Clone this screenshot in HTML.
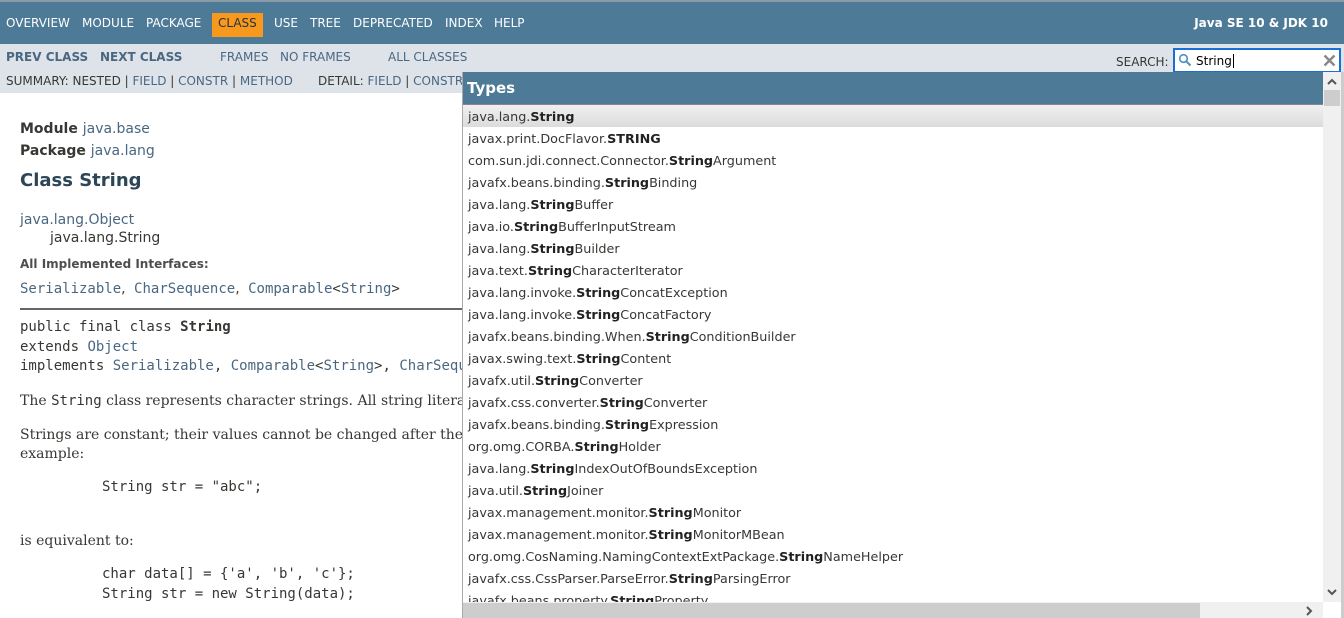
<!DOCTYPE html>
<html><head><meta charset="utf-8"><style>
*{margin:0;padding:0;box-sizing:border-box}
body{width:1344px;height:618px;overflow:hidden;background:#fff;font-family:"DejaVu Sans",sans-serif;position:relative}
.top{position:absolute;left:0;top:0;width:1344px;height:44px;background:#4d7a97;border-top:2px solid #8a9aa6}
.top span{position:absolute;top:14px;color:#fff;font-size:12px}
.top .cls{background:#f8981d;color:#253441;top:11px;height:24px;padding:3px 6px 0}
.jdk{position:absolute;right:16px;top:14px;color:#fff;font-size:11px;font-weight:bold}
.sub{position:absolute;left:0;top:44px;width:1344px;height:49px;background:#dee3e9;font-size:12px;color:#4a6782}
.sub span{position:absolute;white-space:nowrap}
.b{font-weight:bold}
.dk{color:#353833}
.c{font-family:"DejaVu Sans",sans-serif;color:#353833}
a{color:#4a6782;text-decoration:none}
.main{position:absolute;left:20px;color:#353833;white-space:nowrap}
.mono{font-family:"DejaVu Sans Mono",monospace;font-size:14px}
.ser{font-family:"DejaVu Serif",serif;font-size:14px}
.ac{position:absolute;left:462px;top:72px;width:880px;height:546px;background:#fff;border-left:1px solid #aaa;overflow:hidden}
.ac .hd{height:33px;background:#4d7a97;color:#fff;font-weight:bold;font-size:15px;padding:7px 0 0 4px;border-bottom:1px solid #888}
.ac .r{height:22px;font-size:12.75px;color:#353833;padding:5px 0 0 5px;white-space:nowrap}
.ac .r b{color:#222}
.ac .sel{background:linear-gradient(#f0f0f0,#dcdcdc);height:22px}
.vs{position:absolute;left:1323px;top:72px;width:18px;height:530px;background:#f0f0f0}
.hs{position:absolute;left:463px;top:602px;width:860px;height:16px;background:#f0f0f0}
</style></head><body>
<div class="top">
<span style="left:6px">OVERVIEW</span><span style="left:82px">MODULE</span><span style="left:146px">PACKAGE</span>
<span class="cls" style="left:212px">CLASS</span>
<span style="left:274px">USE</span><span style="left:310px">TREE</span><span style="left:353px">DEPRECATED</span><span style="left:445px">INDEX</span><span style="left:494px">HELP</span>
<span class="jdk" style="left:auto">Java SE 10 &amp; JDK 10</span>
</div>
<div class="sub">
<span class="b" style="left:6px;top:6px">PREV CLASS</span><span class="b" style="left:100px;top:6px">NEXT CLASS</span>
<span style="left:220px;top:6px">FRAMES</span><span style="left:280px;top:6px">NO FRAMES</span><span style="left:388px;top:6px">ALL CLASSES</span>
<span style="left:6px;top:30px"><span class="dk" style="position:static">SUMMARY: NESTED |</span> FIELD <span class="dk" style="position:static">|</span> CONSTR <span class="dk" style="position:static">|</span> METHOD</span>
<span style="left:318px;top:30px"><span class="dk" style="position:static">DETAIL:</span> FIELD <span class="dk" style="position:static">|</span> CONSTR</span>
<span class="dk" style="left:1116px;top:11px">SEARCH:</span>
</div>
<div style="position:absolute;left:1173px;top:48px;width:168px;height:25px;border:2px solid #1a6fd6;background:#fff;font-size:12px;color:#000">
<svg style="position:absolute;left:3px;top:3px" width="14" height="14" viewBox="0 0 14 14"><circle cx="5.5" cy="5.5" r="3.8" fill="none" stroke="#4a90c0" stroke-width="1.6"/><path d="M8.3 8.3L12.5 12.5" stroke="#4a90c0" stroke-width="2"/></svg>
<span style="position:absolute;left:21px;top:4px">String<span style="border-left:1px solid #000;margin-left:1px"></span></span>
<svg style="position:absolute;right:3px;top:4px" width="13" height="13" viewBox="0 0 13 13"><path d="M1.5 1.5L11.5 11.5M11.5 1.5L1.5 11.5" stroke="#888" stroke-width="2.4"/></svg>
</div>
<div class="main b" style="top:121px;font-size:14px">Module <a style="font-weight:normal">java.base</a></div>
<div class="main b" style="top:143px;font-size:14px">Package <a style="font-weight:normal">java.lang</a></div>
<div class="main b" style="top:170px;font-size:18px;color:#2c4557">Class String</div>
<div class="main" style="top:212px;font-size:14px"><a>java.lang.Object</a></div>
<div class="main" style="top:230px;left:50px;font-size:14px">java.lang.String</div>
<div class="main b" style="top:257px;font-size:12px;color:#4e4e4e">All Implemented Interfaces:</div>
<div class="main mono" style="top:281px"><a>Serializable</a><span class="c">,</span> <a>CharSequence</a><span class="c">,</span> <a>Comparable</a>&lt;<a>String</a>&gt;</div>
<div style="position:absolute;left:20px;top:308px;width:450px;height:2px;background:#666"></div>
<div class="main mono" style="top:319px">public final class <b>String</b></div>
<div class="main mono" style="top:339px">extends <a>Object</a></div>
<div class="main mono" style="top:358px">implements <a>Serializable</a>, <a>Comparable</a>&lt;<a>String</a>&gt;, <a>CharSequence</a></div>
<div class="main ser" style="top:393px">The <span class="mono">String</span> class represents character strings. All string literals</div>
<div class="main ser" style="top:427px">Strings are constant; their values cannot be changed after they</div>
<div class="main ser" style="top:446px">example:</div>
<div class="main mono" style="top:479px;left:102px">String str = "abc";</div>
<div class="main ser" style="top:533px">is equivalent to:</div>
<div class="main mono" style="top:566px;left:102px">char data[] = {'a', 'b', 'c'};</div>
<div class="main mono" style="top:586px;left:102px">String str = new String(data);</div>
<div class="ac">
<div class="hd">Types</div>
<div class="r sel">java.lang.<b>String</b></div>
<div class="r">javax.print.DocFlavor.<b>STRING</b></div>
<div class="r">com.sun.jdi.connect.Connector.<b>String</b>Argument</div>
<div class="r">javafx.beans.binding.<b>String</b>Binding</div>
<div class="r">java.lang.<b>String</b>Buffer</div>
<div class="r">java.io.<b>String</b>BufferInputStream</div>
<div class="r">java.lang.<b>String</b>Builder</div>
<div class="r">java.text.<b>String</b>CharacterIterator</div>
<div class="r">java.lang.invoke.<b>String</b>ConcatException</div>
<div class="r">java.lang.invoke.<b>String</b>ConcatFactory</div>
<div class="r">javafx.beans.binding.When.<b>String</b>ConditionBuilder</div>
<div class="r">javax.swing.text.<b>String</b>Content</div>
<div class="r">javafx.util.<b>String</b>Converter</div>
<div class="r">javafx.css.converter.<b>String</b>Converter</div>
<div class="r">javafx.beans.binding.<b>String</b>Expression</div>
<div class="r">org.omg.CORBA.<b>String</b>Holder</div>
<div class="r">java.lang.<b>String</b>IndexOutOfBoundsException</div>
<div class="r">java.util.<b>String</b>Joiner</div>
<div class="r">javax.management.monitor.<b>String</b>Monitor</div>
<div class="r">javax.management.monitor.<b>String</b>MonitorMBean</div>
<div class="r">org.omg.CosNaming.NamingContextExtPackage.<b>String</b>NameHelper</div>
<div class="r">javafx.css.CssParser.ParseError.<b>String</b>ParsingError</div>
<div class="r">javafx.beans.property.<b>String</b>Property</div>
</div>
<div class="vs">
<svg style="position:absolute;left:4px;top:6px" width="10" height="8"><path d="M1 6L5 2L9 6" fill="none" stroke="#555" stroke-width="2"/></svg>
<div style="position:absolute;left:1px;top:18px;width:16px;height:16px;background:#cdcdcd"></div>
<svg style="position:absolute;left:4px;top:516px" width="10" height="8"><path d="M1 2L5 6L9 2" fill="none" stroke="#555" stroke-width="2"/></svg>
</div>
<div class="hs"><div style="position:absolute;left:0;top:1px;width:737px;height:15px;background:#cdcdcd"></div>
<svg style="position:absolute;left:842px;top:4px" width="8" height="10"><path d="M2 1L6 5L2 9" fill="none" stroke="#555" stroke-width="2"/></svg></div>
<div style="position:absolute;left:1341px;top:72px;width:3px;height:546px;background:#ccc"></div>
</body></html>
